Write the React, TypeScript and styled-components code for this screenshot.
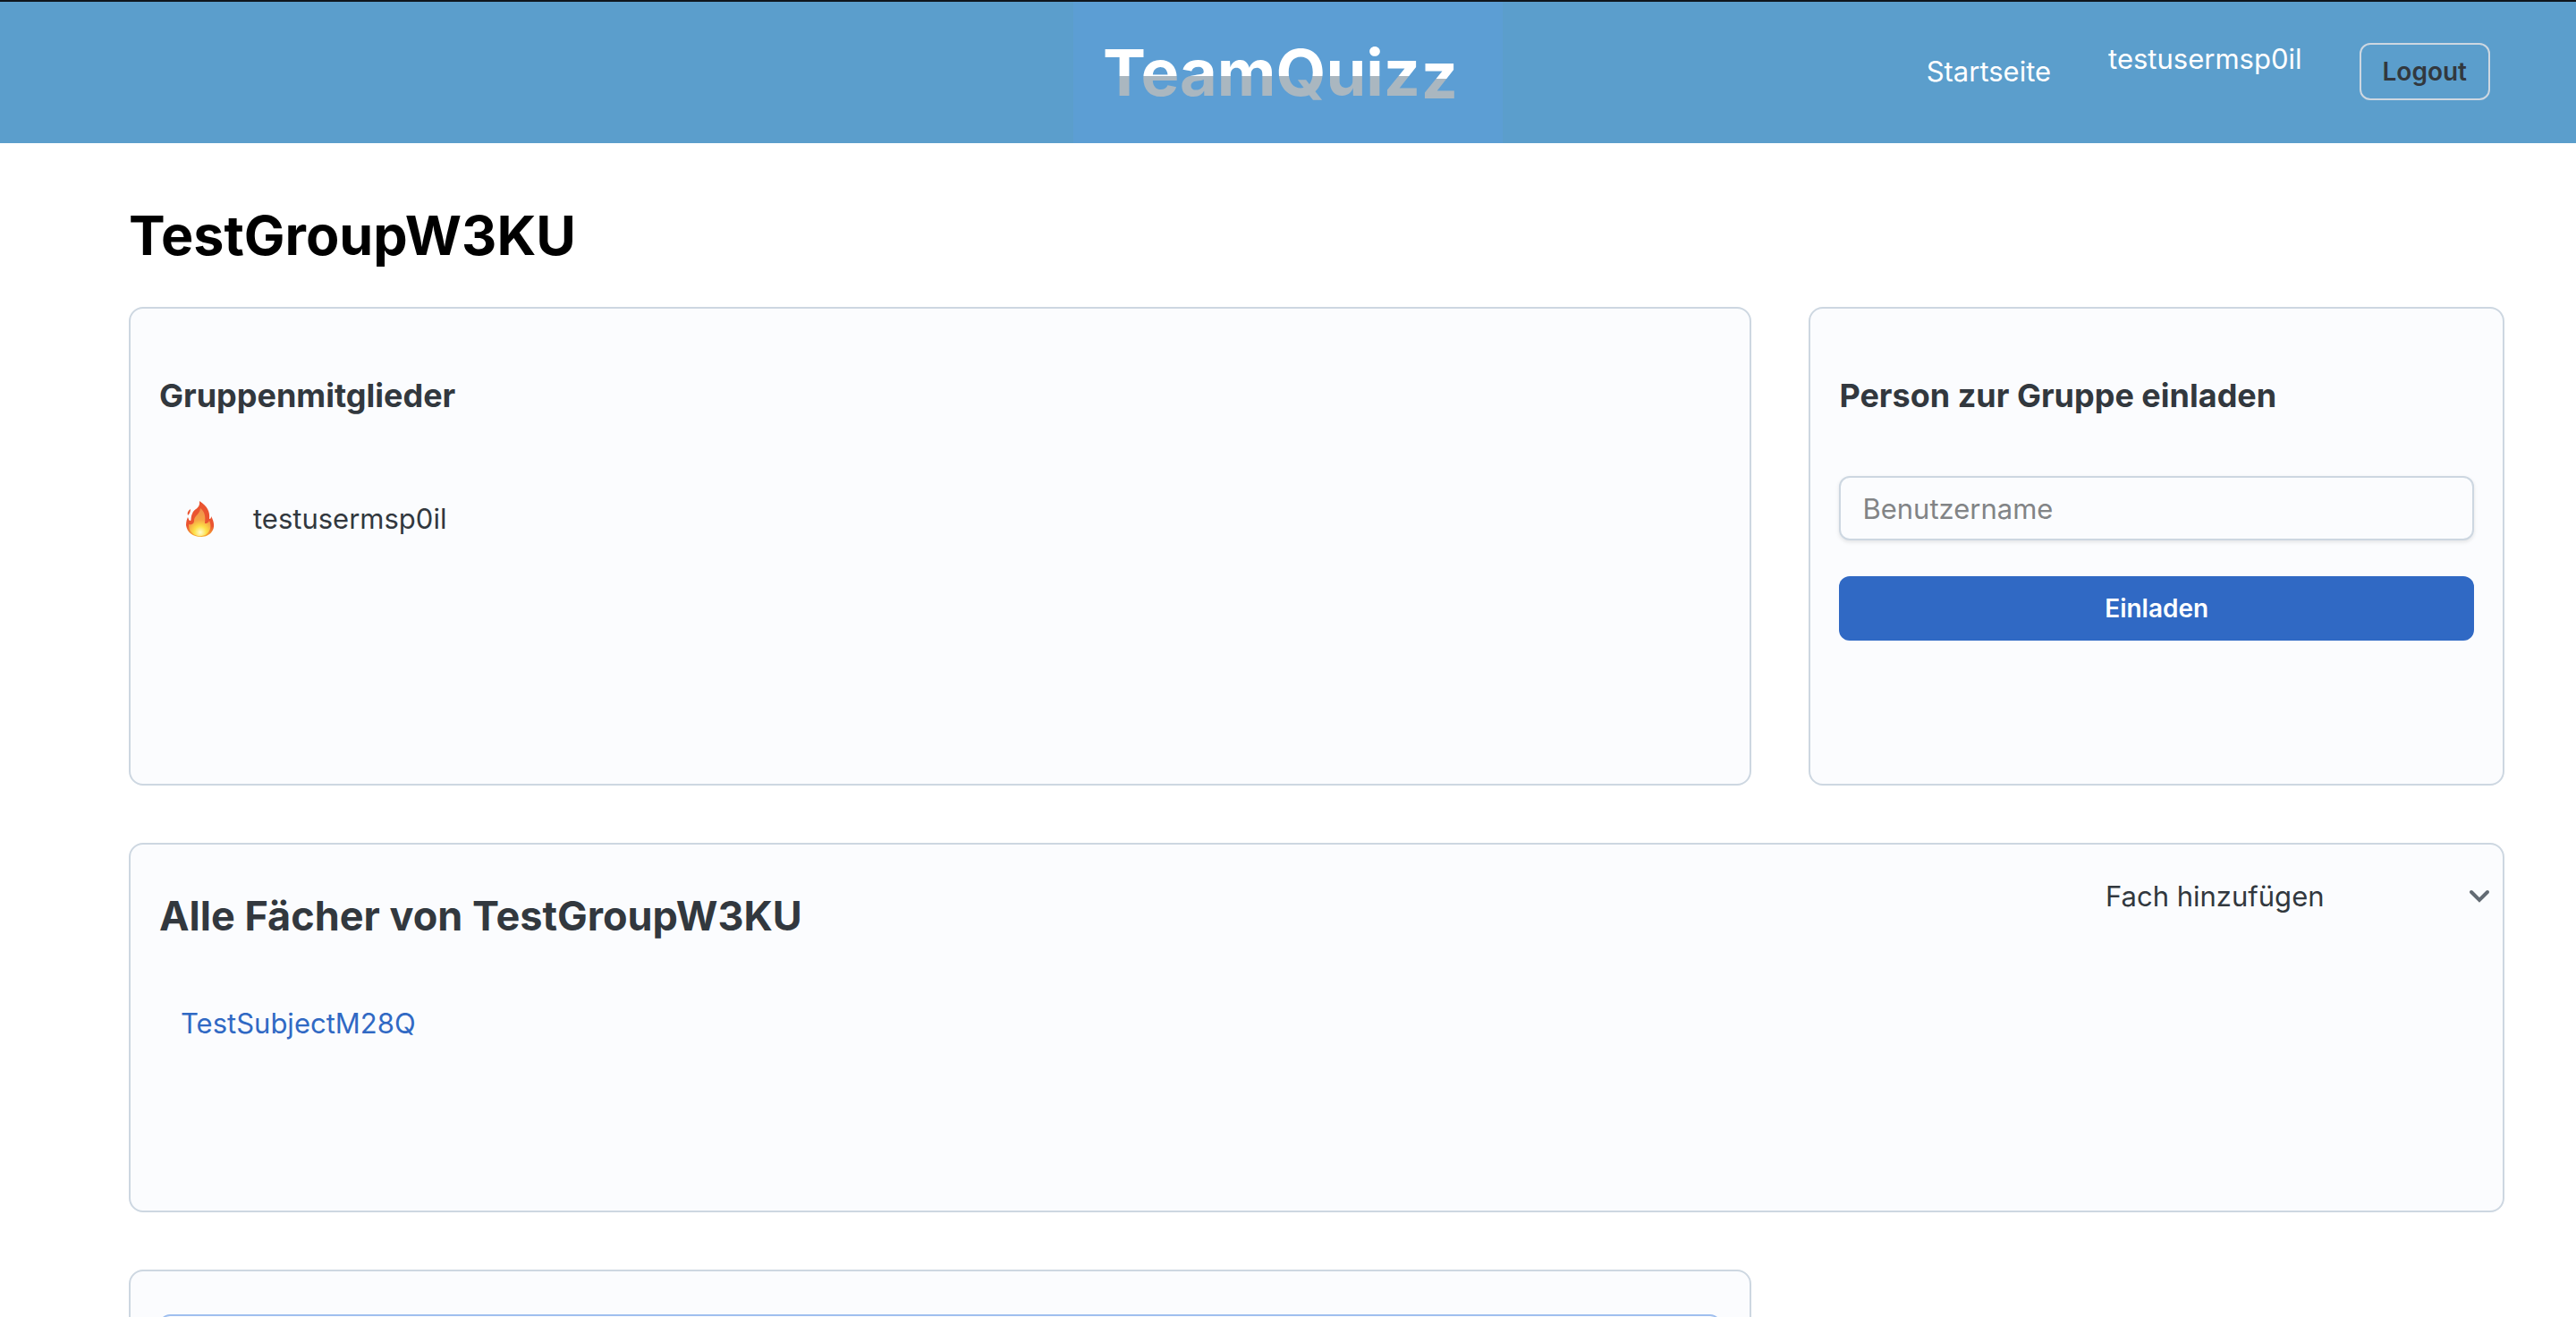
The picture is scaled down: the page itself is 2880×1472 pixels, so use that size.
import React from "react";
import styled, { createGlobalStyle } from "styled-components";

const Global = createGlobalStyle`
  *, *::before, *::after { box-sizing: border-box; }
  body {
    margin: 0;
    background: #fff;
    color: #32383e;
    font-family: Inter, "Liberation Sans", sans-serif;
    font-size: 31px;
    line-height: 48px;
  }
  h1, h2, h3, ul { margin: 0; padding: 0; }
  a { color: inherit; text-decoration: none; }
  button, input { font: inherit; }
`;

const Header = styled.header`
  display: grid;
  grid-template-columns: 1fr 480px 1fr;
  height: 160px;
  border-top: 2px solid #10161d;
  background: #5b9ecc;
`;

const LogoLink = styled.a`
  grid-column: 2;
  display: block;
  height: 158px;
  background: #5c9ed4;
`;

const Nav = styled.nav`
  grid-column: 3;
  display: flex;
  align-items: center;
  justify-content: flex-end;
  gap: 64px;
  padding: 0 96px 2px 0;
  color: #fff;
`;

const UserName = styled.a`
  padding-bottom: 28px;
`;

const LogoutButton = styled.button`
  height: 64px;
  padding: 0 24px;
  border: 2px solid #cdd7e1;
  border-radius: 12px;
  background: transparent;
  color: #32383e;
  font-size: 28px;
  font-weight: 600;
`;

const Main = styled.main`
  display: grid;
  grid-template-columns: 7fr 3fr;
  gap: 64px;
  padding: 63px 80px 0 144px;
`;

const PageTitle = styled.h1`
  grid-column: 1 / -1;
  margin-bottom: -24px;
  color: #000;
  font-size: 61px;
  line-height: 80px;
`;

const Card = styled.section<{ $wide?: boolean; $min: number }>`
  ${(p) => p.$wide && "grid-column: 1 / -1;"}
  min-height: ${(p) => p.$min}px;
  padding: 48px 32px;
  border: 2px solid #cdd7e1;
  border-radius: 16px;
  background: #fbfcfe;
`;

const SectionTitle = styled.h3`
  padding: 25px 0 54px;
  font-size: 36px;
`;

const MemberList = styled.ul`
  padding-top: 24px;
  list-style: none;
`;

const Member = styled.li`
  display: flex;
  align-items: center;
  gap: 43px;
  padding: 12px 30px;
`;

const InviteForm = styled.form`
  display: grid;
  gap: 40px;
  padding-top: 12px;
`;

const TextInput = styled.input`
  width: 100%;
  height: 72px;
  padding: 0 24px;
  border: 2px solid #cdd7e1;
  border-radius: 12px;
  background: #fbfcfe;
  box-shadow: 0 2px 4px rgba(21, 21, 21, 0.1);
  &::placeholder { color: #828486; opacity: 1; }
`;

const PrimaryButton = styled.button`
  height: 72px;
  border: 0;
  border-radius: 12px;
  background: #3069c4;
  color: #fff;
  font-size: 28px;
  font-weight: 600;
`;

const SubjectsHead = styled.div`
  display: flex;
  align-items: flex-start;
  justify-content: space-between;
`;

const SubjectsTitle = styled.h2`
  padding-top: 8px;
  font-size: 45px;
`;

const AddSubject = styled.button`
  display: flex;
  align-items: center;
  justify-content: space-between;
  width: 430px;
  margin: -14px -18px 0 0;
  padding: 0;
  border: 0;
  background: transparent;
  color: #32383e;
`;

const SubjectLink = styled.a`
  display: block;
  padding: 72px 24px 0;
  color: #3069c4;
`;

const InnerPanel = styled.div`
  height: 320px;
  border: 2px solid #9fbfef;
  border-radius: 12px;
`;

function Logo() {
  return (
    <svg width="480" height="158" viewBox="0 0 480 158" role="img" aria-label="TeamQuizz">
      <defs>
        <linearGradient id="split" gradientUnits="userSpaceOnUse" x1="0" y1="0" x2="0" y2="166">
          <stop offset="0.5" stopColor="#ffffff" />
          <stop offset="0.5" stopColor="#aab7c0" />
        </linearGradient>
        <linearGradient id="splitLow" gradientUnits="userSpaceOnUse" x1="0" y1="0" x2="0" y2="172">
          <stop offset="0.5" stopColor="#ffffff" />
          <stop offset="0.5" stopColor="#aab7c0" />
        </linearGradient>
      </defs>
      <g fontFamily="Inter, sans-serif" fontWeight="700" fontSize="72">
        <text x="33" y="105" fill="url(#split)">TeamQuiz</text>
        <text x="430" y="108" textAnchor="end" fill="url(#splitLow)">z</text>
      </g>
    </svg>
  );
}

function Flame() {
  return (
    <svg width="32" height="40" viewBox="0 0 32 40" aria-hidden="true">
      <defs>
        <radialGradient id="fire" gradientUnits="userSpaceOnUse" cx="16" cy="35" r="28">
          <stop offset="0" stopColor="#fffbd0" />
          <stop offset="0.25" stopColor="#fde047" />
          <stop offset="0.5" stopColor="#f6a545" />
          <stop offset="1" stopColor="#ef8a4c" />
        </radialGradient>
        <linearGradient id="edge" x1="0" y1="0" x2="0" y2="1">
          <stop offset="0.7" stopColor="#ea5430" />
          <stop offset="1" stopColor="#f9b233" />
        </linearGradient>
      </defs>
      <path fill="url(#edge)" d="M15 0C24 6 27 12 26 20C28 20 28 18 28 17C32 24 32 30 29 34C26 39 20 40 16 40C8 40 1 35 0 27C0 23 1 20 2 18C3 20 3 22 5 22C6 22 5 18 7 14C9 8 16 9 15 0Z" />
      <path fill="url(#fire)" d="M16 8C21 12 22 17 21 25C25 25 25 23 26 22C29 28 27 34 23 37C19 40 11 40 7 36C3 33 3 28 3 26C5 27 9 26 9 22C9 16 15 16 16 8Z" />
      <path fill="#ea5430" d="M5 9C2 11 1 13 2 16C4 14 5 12 5 9Z" />
    </svg>
  );
}

function Chevron() {
  return (
    <svg width="24" height="16" viewBox="0 0 24 16" fill="none" stroke="#636b74" strokeWidth="4" strokeLinecap="round" aria-hidden="true">
      <path d="M3 3L12 12L21 3" />
    </svg>
  );
}

export default function App() {
  return (
    <>
      <Global />
      <Header>
        <LogoLink href="#"><Logo /></LogoLink>
        <Nav>
          <a href="#">Startseite</a>
          <UserName href="#">testusermsp0il</UserName>
          <LogoutButton type="button">Logout</LogoutButton>
        </Nav>
      </Header>
      <Main>
        <PageTitle>TestGroupW3KU</PageTitle>
        <Card $min={535}>
          <SectionTitle>Gruppenmitglieder</SectionTitle>
          <MemberList>
            <Member><Flame />testusermsp0il</Member>
          </MemberList>
        </Card>
        <Card $min={535}>
          <SectionTitle>Person zur Gruppe einladen</SectionTitle>
          <InviteForm>
            <TextInput placeholder="Benutzername" aria-label="Benutzername" />
            <PrimaryButton type="button">Einladen</PrimaryButton>
          </InviteForm>
        </Card>
        <Card $wide $min={413}>
          <SubjectsHead>
            <SubjectsTitle>Alle Fächer von TestGroupW3KU</SubjectsTitle>
            <AddSubject type="button" aria-expanded="false">Fach hinzufügen<Chevron /></AddSubject>
          </SubjectsHead>
          <SubjectLink href="#">TestSubjectM28Q</SubjectLink>
        </Card>
        <Card $min={413}>
          <InnerPanel />
        </Card>
      </Main>
    </>
  );
}
